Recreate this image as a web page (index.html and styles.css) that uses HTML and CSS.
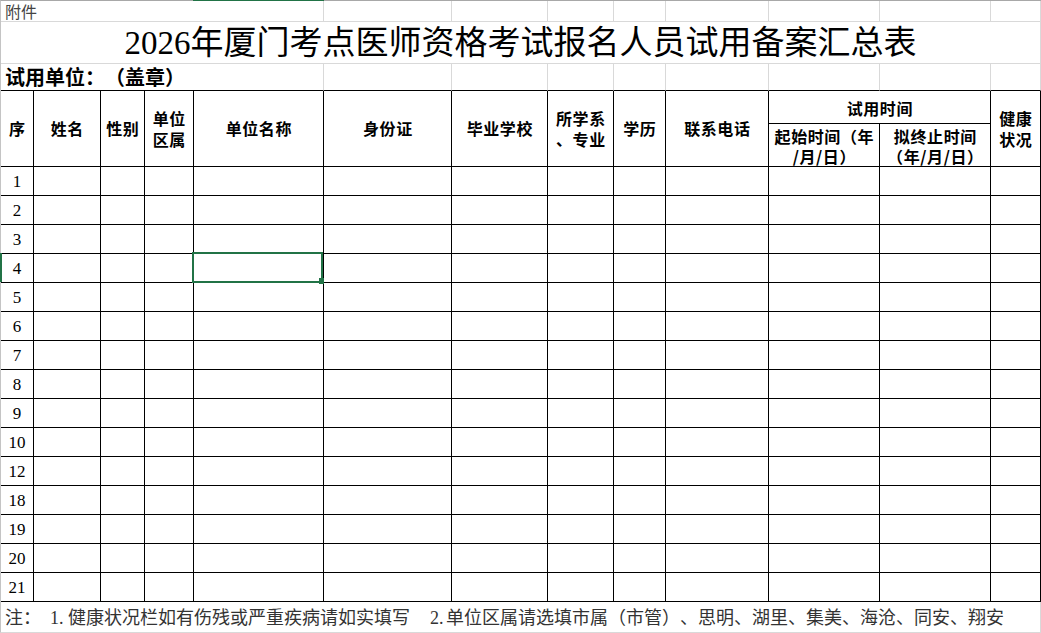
FILE: index.html
```html
<!DOCTYPE html>
<html lang="zh-CN">
<head>
<meta charset="utf-8">
<title>2026年厦门考点医师资格考试报名人员试用备案汇总表</title>
<link rel="stylesheet" href="styles.css">
</head>
<body>
<div class="sheet">
  <div class="mark-col"></div>
  <div class="mark-row"></div>
  <table class="grid">
    <colgroup>
      <col class="c-no"><col class="c-name"><col class="c-sex"><col class="c-area"><col class="c-unit"><col class="c-id"><col class="c-school"><col class="c-major"><col class="c-edu"><col class="c-tel"><col class="c-start"><col class="c-end"><col class="c-health">
    </colgroup>
    <tbody>
      <tr class="r-attach">
        <td colspan="5" class="g attach">附件</td>
        <td class="g"></td><td class="g"></td><td class="g"></td><td class="g"></td><td class="g"></td><td class="g"></td><td class="g"></td><td class="g"></td>
      </tr>
      <tr class="r-title">
        <td colspan="13" class="g title">2026年厦门考点医师资格考试报名人员试用备案汇总表</td>
      </tr>
      <tr class="r-unit">
        <td colspan="5" class="g gb unit">试用单位：（盖章）</td>
        <td class="g gb"></td><td class="g gb"></td><td class="g gb"></td><td class="g gb"></td><td class="g gb"></td><td class="g gb"></td><td class="g gb"></td><td class="g gb"></td>
      </tr>
      <tr class="r-h1">
        <th rowspan="2">序</th>
        <th rowspan="2">姓名</th>
        <th rowspan="2">性别</th>
        <th rowspan="2">单位<br>区属</th>
        <th rowspan="2">单位名称</th>
        <th rowspan="2">身份证</th>
        <th rowspan="2">毕业学校</th>
        <th rowspan="2">所学系<br>、专业</th>
        <th rowspan="2">学历</th>
        <th rowspan="2">联系电话</th>
        <th colspan="2" class="period">试用时间</th>
        <th rowspan="2">健康<br>状况</th>
      </tr>
      <tr class="r-h2">
        <th class="sub">起始时间（年<br>/月/日）</th>
        <th class="sub">拟终止时间<br>（年/月/日）</th>
      </tr>
      <tr class="r-data"><td class="num">1</td><td></td><td></td><td></td><td></td><td></td><td></td><td></td><td></td><td></td><td></td><td></td><td></td></tr>
      <tr class="r-data"><td class="num">2</td><td></td><td></td><td></td><td></td><td></td><td></td><td></td><td></td><td></td><td></td><td></td><td></td></tr>
      <tr class="r-data"><td class="num">3</td><td></td><td></td><td></td><td></td><td></td><td></td><td></td><td></td><td></td><td></td><td></td><td></td></tr>
      <tr class="r-data"><td class="num">4</td><td></td><td></td><td></td><td class="sel"></td><td></td><td></td><td></td><td></td><td></td><td></td><td></td><td></td></tr>
      <tr class="r-data"><td class="num">5</td><td></td><td></td><td></td><td></td><td></td><td></td><td></td><td></td><td></td><td></td><td></td><td></td></tr>
      <tr class="r-data"><td class="num">6</td><td></td><td></td><td></td><td></td><td></td><td></td><td></td><td></td><td></td><td></td><td></td><td></td></tr>
      <tr class="r-data"><td class="num">7</td><td></td><td></td><td></td><td></td><td></td><td></td><td></td><td></td><td></td><td></td><td></td><td></td></tr>
      <tr class="r-data"><td class="num">8</td><td></td><td></td><td></td><td></td><td></td><td></td><td></td><td></td><td></td><td></td><td></td><td></td></tr>
      <tr class="r-data"><td class="num">9</td><td></td><td></td><td></td><td></td><td></td><td></td><td></td><td></td><td></td><td></td><td></td><td></td></tr>
      <tr class="r-data"><td class="num">10</td><td></td><td></td><td></td><td></td><td></td><td></td><td></td><td></td><td></td><td></td><td></td><td></td></tr>
      <tr class="r-data"><td class="num">12</td><td></td><td></td><td></td><td></td><td></td><td></td><td></td><td></td><td></td><td></td><td></td><td></td></tr>
      <tr class="r-data"><td class="num">18</td><td></td><td></td><td></td><td></td><td></td><td></td><td></td><td></td><td></td><td></td><td></td><td></td></tr>
      <tr class="r-data"><td class="num">19</td><td></td><td></td><td></td><td></td><td></td><td></td><td></td><td></td><td></td><td></td><td></td><td></td></tr>
      <tr class="r-data"><td class="num">20</td><td></td><td></td><td></td><td></td><td></td><td></td><td></td><td></td><td></td><td></td><td></td><td></td></tr>
      <tr class="r-data"><td class="num">21</td><td></td><td></td><td></td><td></td><td></td><td></td><td></td><td></td><td></td><td></td><td></td><td></td></tr>
      <tr class="r-note">
        <td colspan="13" class="g note">注：<span class="ni">1.</span><span class="n1">健康状况栏如有伤残或严重疾病请如实填写</span><span class="ni ni2">2.</span><span class="n2">单位区属请选填市属（市管）、思明、湖里、集美、海沧、同安、翔安</span></td>
      </tr>
    </tbody>
  </table>
</div>
</body>
</html>
```

FILE: styles.css
```css
* { box-sizing: border-box; }

html, body {
  margin: 0;
  padding: 0;
}

body {
  background: #e8e8e8;
  font-family: "Noto Sans CJK SC", sans-serif;
  color: #000;
  text-spacing-trim: space-all;
}

.sheet {
  position: relative;
  width: 1041px;
  height: 633px;
  background: #fff;
  border-top: 1px solid #a8a8a8;
  border-left: 1px solid #c4c4c4;
  border-bottom: 1px solid #e0e0e0;
}

.mark-col {
  position: absolute;
  top: -1px;
  left: 192px;
  width: 131px;
  height: 1px;
  background: #217346;
}

.mark-row {
  position: absolute;
  top: 252px;
  left: -1px;
  width: 2px;
  height: 29px;
  background: #217346;
}

.grid {
  border-collapse: separate;
  border-spacing: 0;
  table-layout: fixed;
  width: 1040px;
}

.c-no { width: 33px; }
.c-name { width: 67px; }
.c-sex { width: 44px; }
.c-area { width: 49px; }
.c-unit { width: 130px; }
.c-id { width: 128px; }
.c-school { width: 96px; }
.c-major { width: 66px; }
.c-edu { width: 52px; }
.c-tel { width: 103px; }
.c-start { width: 111px; }
.c-end { width: 111px; }
.c-health { width: 50px; }

.grid td,
.grid th {
  padding: 0;
  border-right: 1px solid #000;
  border-bottom: 1px solid #000;
  text-align: center;
  vertical-align: middle;
  white-space: nowrap;
}

.grid .g {
  border-right-color: #d9d9d9;
  border-bottom-color: #d9d9d9;
}

.grid .gb {
  border-bottom-color: #000;
}

.r-attach { height: 21px; }
.r-title { height: 42px; }
.r-unit { height: 27px; }
.r-h1 { height: 33px; }
.r-h2 { height: 43px; }
.r-data { height: 29px; }
.r-note { height: 30px; }

.grid .attach {
  text-align: left;
  padding-left: 4px;
  font-size: 16px;
  line-height: 20px;
  color: #444;
}

.grid .title {
  font-family: "Liberation Serif", "Noto Sans CJK SC", serif;
  font-size: 33px;
  line-height: 40px;
  font-weight: 400;
  color: #000;
}

.grid .unit {
  text-align: left;
  padding-left: 4px;
  font-size: 20px;
  line-height: 26px;
  font-weight: 700;
}

.grid th {
  font-size: 16px;
  line-height: 21px;
  font-weight: 700;
  letter-spacing: 0.6px;
  padding-left: 0.6px;
}

.grid th.period {
  padding-top: 3px;
}

.grid th.sub {
  padding-top: 1px;
  line-height: 20px;
}

.grid .num {
  font-family: "Liberation Serif", serif;
  font-size: 17px;
  line-height: 26px;
  padding-top: 2px;
}

.grid .sel {
  position: relative;
}

.grid .sel::after {
  content: "";
  position: absolute;
  left: -2px;
  top: -2px;
  right: 0;
  bottom: -1px;
  border: 2px solid #217346;
}

.grid .sel::before {
  content: "";
  position: absolute;
  right: -1px;
  bottom: -2px;
  width: 5px;
  height: 6px;
  background: #217346;
  z-index: 1;
}

.grid .note {
  text-align: left;
  padding-left: 4px;
  font-size: 18px;
  line-height: 28px;
  color: #333;
}

.ni {
  display: inline-block;
  width: 18px;
  margin-left: 9px;
  font-family: "Liberation Serif", serif;
}

.ni2 {
  margin-left: 20px;
  width: 16px;
}
```
